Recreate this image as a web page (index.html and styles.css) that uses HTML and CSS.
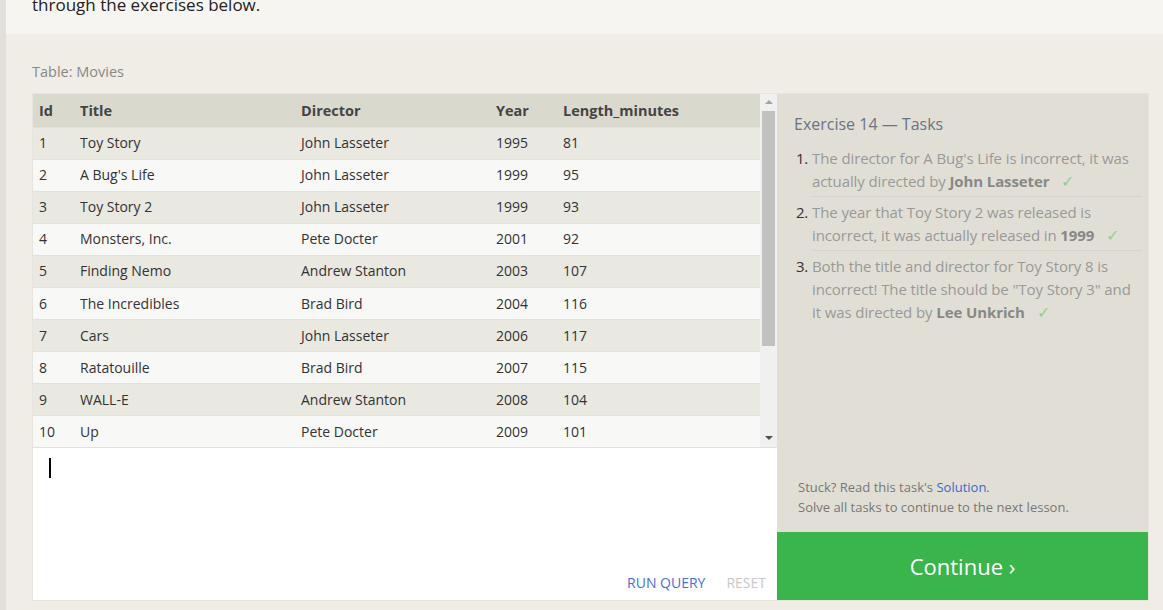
FILE: index.html
```html
<!DOCTYPE html>
<html>
<head>
<meta charset="utf-8">
<link rel="stylesheet" href="styles.css">
</head>
<body>
<div class="page">
  <div class="strip"></div>
  <div class="main">
    <div class="intro"><p>through the exercises below.</p></div>
    <div class="exercise">
      <div class="table-label">Table: Movies</div>
      <div class="box">
        <div class="left">
          <div class="table-wrap">
            <table class="movies">
              <thead>
                <tr><th class="c-id">Id</th><th class="c-title">Title</th><th class="c-dir">Director</th><th class="c-year">Year</th><th>Length_minutes</th></tr>
              </thead>
              <tbody>
                <tr><td>1</td><td>Toy Story</td><td>John Lasseter</td><td>1995</td><td>81</td></tr>
                <tr><td>2</td><td>A Bug's Life</td><td>John Lasseter</td><td>1999</td><td>95</td></tr>
                <tr><td>3</td><td>Toy Story 2</td><td>John Lasseter</td><td>1999</td><td>93</td></tr>
                <tr><td>4</td><td>Monsters, Inc.</td><td>Pete Docter</td><td>2001</td><td>92</td></tr>
                <tr><td>5</td><td>Finding Nemo</td><td>Andrew Stanton</td><td>2003</td><td>107</td></tr>
                <tr><td>6</td><td>The Incredibles</td><td>Brad Bird</td><td>2004</td><td>116</td></tr>
                <tr><td>7</td><td>Cars</td><td>John Lasseter</td><td>2006</td><td>117</td></tr>
                <tr><td>8</td><td>Ratatouille</td><td>Brad Bird</td><td>2007</td><td>115</td></tr>
                <tr><td>9</td><td>WALL-E</td><td>Andrew Stanton</td><td>2008</td><td>104</td></tr>
                <tr><td>10</td><td>Up</td><td>Pete Docter</td><td>2009</td><td>101</td></tr>
              </tbody>
            </table>
            <div class="scrollbar">
              <div class="arrow up"></div>
              <div class="track"><div class="thumb"></div></div>
              <div class="arrow down"></div>
            </div>
          </div>
          <div class="editor">
            <div class="cursor"></div>
            <div class="actions">
              <span class="run">RUN QUERY</span>
              <span class="reset">RESET</span>
            </div>
          </div>
        </div>
        <div class="right">
          <div class="tasks">
            <h3 class="tasks-title">Exercise 14 — Tasks</h3>
            <ol class="task-list">
              <li><span>The director for A Bug's Life is incorrect, it was actually directed by <b>John Lasseter</b> <i class="check">✓</i></span></li>
              <li><span>The year that Toy Story 2 was released is incorrect, it was actually released in <b>1999</b> <i class="check">✓</i></span></li>
              <li><span>Both the title and director for Toy Story 8 is incorrect! The title should be "Toy Story 3" and it was directed by <b>Lee Unkrich</b> <i class="check">✓</i></span></li>
            </ol>
            <div class="help">
              <p>Stuck? Read this task's <a class="solution">Solution</a>.</p>
              <p>Solve all tasks to continue to the next lesson.</p>
            </div>
          </div>
          <div class="continue">Continue ›</div>
        </div>
      </div>
    </div>
  </div>
</div>
</body>
</html>
```

FILE: styles.css
```css
* { box-sizing: border-box; }
html, body { margin: 0; padding: 0; }
body {
  font-family: "Open Sans", "Noto Sans", sans-serif;
  background: #efede6;
  height: 610px;
  overflow: hidden;
}
.page { display: flex; height: 610px; }
.strip { width: 6px; background: #e2dfdb; flex: none; }
.main { flex: 1; display: flex; flex-direction: column; }
.intro {
  height: 34px;
  background: #f6f5f2;
  padding-left: 26px;
  overflow: hidden;
}
.intro p {
  margin: -9px 0 0;
  font-size: 17px;
  line-height: 28px;
  color: #222;
}
.exercise { padding: 27px 0 0 26px; }
.table-label {
  font-size: 14.5px;
  color: #888;
  line-height: 20px;
  margin-top: 1px;
  margin-bottom: 11px;
}
.box {
  display: flex;
  width: 1117px;
  height: 508px;
  border: 1px solid #e6e4dc;
}
.left { width: 744px; display: flex; flex-direction: column; background: #fff; }
.table-wrap { display: flex; height: 354px; }
.movies {
  width: 727px;
  border-collapse: collapse;
  font-size: 14px;
  color: #333;
  align-self: flex-start;
}
.movies th {
  background: #dad9ce;
  text-align: left;
  font-weight: 700;
  font-size: 14.5px;
  color: #444;
  height: 33px;
  padding: 0 6px;
}
.movies td {
  height: 32.1px;
  padding: 0 6px 1px;
  border-top: 1px solid #e2e1da;
}
.movies tbody tr:nth-child(odd) td { background: #e9e8e1; }
.movies tbody tr:nth-child(even) td { background: #f8f8f7; }
.movies tbody tr:last-child td { border-bottom: 1px solid #e2e1da; }
.c-id { width: 41px; }
.c-title { width: 221px; }
.c-dir { width: 195px; }
.c-year { width: 67px; }
.scrollbar {
  width: 17px;
  background: #f0f0f0;
  display: flex;
  flex-direction: column;
  align-items: center;
  border-bottom: 1px solid #e2e1da;
}
.arrow { height: 17px; width: 100%; position: relative; }
.arrow::after {
  content: "";
  position: absolute;
  left: 5px;
  top: 6px;
  border-left: 4px solid transparent;
  border-right: 4px solid transparent;
}
.arrow.up::after { border-bottom: 4px solid #a3a3a3; }
.arrow.down::after { border-top: 4px solid #505050; }
.track { flex: 1; width: 100%; }
.thumb { width: 13px; margin: 0 auto; height: 235px; background: #c1c1c1; }
.editor {
  flex: 1;
  position: relative;
  padding: 10px 16px;
  display: flex;
  flex-direction: column;
  justify-content: space-between;
}
.cursor { width: 2px; height: 20px; background: #000; }
.actions {
  align-self: flex-end;
  display: flex;
  gap: 21px;
  font-size: 14px;
  margin-right: -5px;
  margin-bottom: -2px;
}
.run { color: #4a6fd8; }
.reset { color: #c9c9c9; }
.right {
  flex: 1;
  display: flex;
  flex-direction: column;
  background: #e1dfd5;
}
.tasks {
  flex: 1;
  padding: 19px 6px 0 17px;
  display: flex;
  flex-direction: column;
}
.tasks-title {
  margin: 0 0 12px;
  font-weight: 400;
  font-size: 16px;
  color: #6a7486;
  line-height: 22px;
}
.task-list {
  margin: 0;
  padding: 0 0 0 18px;
  font-size: 15px;
  line-height: 23px;
  color: #999;
  letter-spacing: -0.1px;
}
.task-list li { padding: 0 0 3px 0; margin-bottom: 4px; border-bottom: 1px solid #d6d4ca; }
.task-list li::marker { color: #333; }
.task-list li:last-child { border-bottom: none; }
.task-list b { color: #888; }
.check { font-style: normal; color: #8fd18f; margin-left: 8px; font-size: 16px; }
.help {
  margin-top: auto;
  padding: 0 0 15px 4px;
  font-size: 13px;
  color: #777;
  line-height: 20px;
}
.help p { margin: 0; }
.solution { color: #3a68d0; }
.continue {
  height: 68px;
  background: #3ab54b;
  color: #fff;
  font-size: 22px;
  display: flex;
  align-items: center;
  justify-content: center;
}
```
